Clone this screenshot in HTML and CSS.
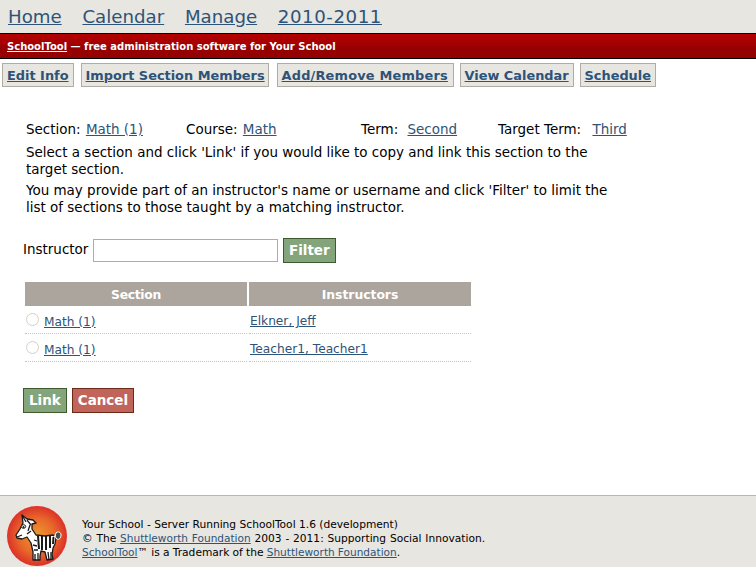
FILE: index.html
```html
<!DOCTYPE html>
<html lang="en">
<head>
<meta charset="utf-8">
<title>SchoolTool</title>
<link rel="stylesheet" href="styles.css">
</head>
<body>
<div class="page">
  <nav class="topnav">
    <a href="#">Home</a><a href="#">Calendar</a><a href="#">Manage</a><a class="year" href="#">2010-2011</a>
  </nav>
  <div class="banner"><a href="#">SchoolTool</a> — free administration software for Your School</div>
  <div class="tabs">
    <a class="tab" href="#">Edit Info</a>
    <a class="tab" href="#">Import Section Members</a>
    <a class="tab" href="#">Add/Remove Members</a>
    <a class="tab" href="#">View Calendar</a>
    <a class="tab" href="#">Schedule</a>
  </div>
  <main class="content">
    <div class="meta">
      <span class="m1">Section: <a href="#">Math (1)</a></span>
      <span class="m2">Course: <a href="#">Math</a></span>
      <span class="m3">Term: <a href="#">Second</a></span>
      <span class="m4">Target Term: <a href="#">Third</a></span>
    </div>
    <p class="info first">Select a section and click 'Link' if you would like to copy and link this section to the target section.</p>
    <p class="info">You may provide part of an instructor's name or username and click 'Filter' to limit the list of sections to those taught by a matching instructor.</p>
    <form class="filter">
      <label for="instructor">Instructor</label>
      <input id="instructor" class="field" type="text">
      <button class="btn ok" type="button">Filter</button>
    </form>
    <table class="list">
      <thead>
        <tr><th>Section</th><th>Instructors</th></tr>
      </thead>
      <tbody>
        <tr>
          <td><span class="radio"></span><a class="low" href="#">Math (1)</a></td>
          <td><a href="#">Elkner, Jeff</a></td>
        </tr>
        <tr>
          <td><span class="radio"></span><a class="low" href="#">Math (1)</a></td>
          <td><a href="#">Teacher1, Teacher1</a></td>
        </tr>
      </tbody>
    </table>
    <div class="actions">
      <button class="btn ok" type="button">Link</button>
      <button class="btn cancel" type="button">Cancel</button>
    </div>
  </main>
  <footer class="footer">
    <svg class="logo" width="60" height="60" viewBox="0 0 60 60" aria-hidden="true">
      <defs>
        <radialGradient id="sun" cx="0.5" cy="0.5" r="0.5">
          <stop offset="0" stop-color="#ee9a30"/>
          <stop offset="0.6" stop-color="#e8682a"/>
          <stop offset="1" stop-color="#dc3128"/>
        </radialGradient>
      </defs>
      <circle cx="30" cy="30" r="30" fill="url(#sun)"/>
      <path d="M15 9 L20 13 L26 14 L29 17 L25 18 L25 23 L29 29 L38 30 L46 29 L49 32 L48 38 L46 42 L45 49 L46 53 L40 54 L38 46 L34 45 L33 50 L33 54 L26 54 L26 46 L24 37 L20 31 L15 33 L10 32 L9 29 L13 23 L16 17 Z" fill="#fff" stroke="#1a1a1a" stroke-width="1.3" stroke-linejoin="round"/>
      <path d="M31 30 L32 43 M35 30 L35 44 M39 30 L39 44 M43 30 L43 42 M46.5 31 L46 38" stroke="#1a1a1a" stroke-width="2" fill="none"/>
      <path d="M27 34 L30 35 M26 39 L30 40 M27 44 L31 44 M28 48 L28 54 M31 47 L31 54 M41 46 L42 54 M44 46 L44 53" stroke="#1a1a1a" stroke-width="1.3" fill="none"/>
      <path d="M15 9 L19 16 M20 14 L24 19 M23 19 L21 25 M24 25 L20 28" stroke="#1a1a1a" stroke-width="1.3" fill="none"/>
      <ellipse cx="16.500" cy="20.500" rx="2.200" ry="1.800" fill="#fff" stroke="#1a1a1a" stroke-width="1"/>
      <circle cx="16.500" cy="21" r="0.900" fill="#1a1a1a"/>
      <path d="M10 31 L15 29" stroke="#1a1a1a" stroke-width="1.2" fill="none"/>
      <path d="M47 31 C49 30 50 28 50 26" stroke="#fff" stroke-width="1.800" fill="none"/>
      <path d="M49 27 C51 25 54 26 54 29 C54 32 52 34 50 33 C48 32 48 29 49 27 Z" fill="#4a4a48" stroke="#fff" stroke-width="1"/>
    </svg>
    <div class="credits">
      <div>Your School - Server Running SchoolTool 1.6 (development)</div>
      <div class="l2">© The <a href="#">Shuttleworth Foundation</a> 2003 - 2011: Supporting Social Innovation.</div>
      <div class="l3"><a href="#">SchoolTool</a>™ is a Trademark of the <a href="#">Shuttleworth Foundation</a>.</div>
    </div>
  </footer>
</div>
</body>
</html>
```
FILE: styles.css
```css
* { box-sizing: border-box; }
html, body { margin: 0; height: 100%; }
body { font-family: "DejaVu Sans", Verdana, sans-serif; font-size: 13.47px; color: #000; background: #fff; }
a { color: #2e5378; text-decoration: underline; }
.page { height: 567px; display: flex; flex-direction: column; overflow: hidden; }

.topnav { height: 33px; background: #e8e6e1; padding: 5px 8px 0; font-size: 18.2px; line-height: 23px; display: flex; gap: 20.7px; }
.year { letter-spacing: 0.55px; }

.banner { height: 26px; border-top: 1px solid #000; border-bottom: 1px solid #000; background: linear-gradient(#b30000 0, #a80000 35%, #950000 60%, #950000 100%); color: #fff; font-size: 10px; font-weight: bold; line-height: 25px; padding-left: 7px; }
.banner a { color: #fff; }

.tabs { display: flex; gap: 6px; padding: 4px 2px 0; }
.tab { height: 24px; background: #e8e6e1; border: 1px solid #b0aca3; padding: 0 4px; font-size: 12.9px; font-weight: bold; line-height: 23px; white-space: nowrap; }
.tab:nth-child(2) { margin-left: 1px; width: 188px; }
.tab:nth-child(3) { margin-left: 2px; width: 177px; letter-spacing: 0.2px; }
.tab:nth-child(4) { width: 114px; }

.content { flex: 1; padding: 0 0 0 23px; }
.meta { display: flex; margin: 34px 0 0 3px; line-height: 17px; }
.m1 { width: 160px; }
.m2 { width: 175px; }
.m3 { width: 137px; }
.m1 a, .m2 a { margin-left: 1px; }
.m3 a { margin-left: 5px; }
.m4 a { margin-left: 7px; }

.info { width: 590px; margin: 4px 0 0 3px; line-height: 17px; }
.info.first { margin-top: 6px; }

.filter { display: flex; align-items: center; gap: 5px; margin-top: 22px; height: 25px; }
.filter label { width: 65px; white-space: nowrap; padding-bottom: 4px; }
.field { width: 185px; height: 23px; border: 1px solid #b0aca3; background: #fff; padding: 0 3px; }
.btn { font-family: inherit; font-size: 13.47px; font-weight: bold; color: #fff; height: 25px; padding: 0 5px 2px; border: 1px solid; line-height: 20px; }
.ok { background: #84a57c; border-color: #3f5a2c; }
.cancel { background: #c1645a; border-color: #6e2a18; }

.list { border-collapse: separate; border-spacing: 2px 0; margin: 19px 0 0 0; width: 450px; table-layout: fixed; }
.list th:first-child, .list td:first-child { width: 222px; }
.list th { background: #aca59d; color: #fff; font-size: 12.35px; font-weight: bold; height: 24px; padding: 2px 0 0; text-align: center; }
.list th:first-child { letter-spacing: -0.3px; }
.list td { height: 28px; border-bottom: 1px dotted #c4c4c4; padding: 3px 0 0 1px; vertical-align: middle; font-size: 12.2px; }
.radio { display: inline-block; width: 13px; height: 13px; border: 1px solid #d6cfc7; border-radius: 50%; background: #fff; margin-right: 5px; position: relative; top: -2px; vertical-align: middle; }
.low { position: relative; top: 1px; }

.actions { display: flex; gap: 5px; margin-top: 26px; }

.footer { height: 72px; background: #e8e6e1; border-top: 1px solid #b8b6b0; display: flex; align-items: flex-start; padding: 10px 0 0 7px; font-size: 10.67px; line-height: 14px; }
.logo { flex: none; }
.credits { margin: 12px 0 0 15px; }
.credits div { height: 14px; }
.credits a { font-size: 10.55px; line-height: 1; }
.l2 { word-spacing: 0.4px; }
.l3 { word-spacing: -0.2px; }
```
